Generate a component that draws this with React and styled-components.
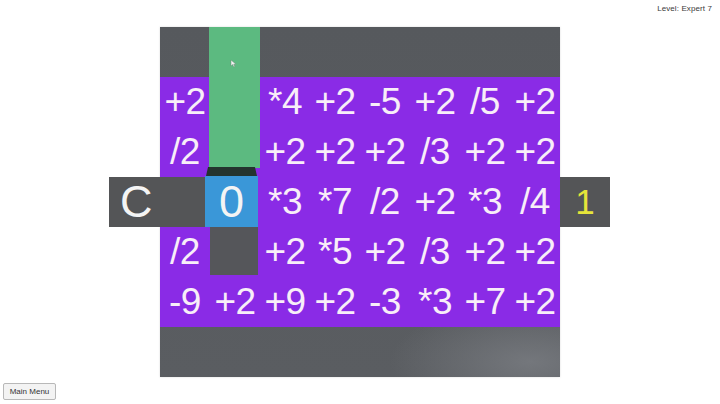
import React from "react";
import styled, { createGlobalStyle } from "styled-components";

const Global = createGlobalStyle`
  html, body { margin: 0; padding: 0; background: #ffffff; }
  body { font-family: "Liberation Sans", Arial, sans-serif; }
`;

const Page = styled.div`
  width: 720px;
  height: 404px;
  display: flex;
  flex-direction: column;
  overflow: hidden;
  background: #ffffff;
`;

const TopBar = styled.div`
  height: 27px;
  display: flex;
  justify-content: flex-end;
  align-items: flex-start;
  padding: 4px 8px 0 0;
  box-sizing: border-box;
`;

const LevelLabel = styled.span`
  font-size: 8px;
  color: #3a3a3a;
  letter-spacing: 0.1px;
`;

const Stage = styled.div`
  display: flex;
  justify-content: center;
`;

const Board = styled.div`
  position: relative;
  width: 400px;
  height: 350px;
  display: grid;
  grid-template-columns: repeat(8, 50px);
  grid-template-rows: 50px repeat(5, 50px) 50px;
  background: radial-gradient(ellipse 140px 60px at 370px 335px, #74777c 0%, rgba(116,119,124,0) 100%),
    linear-gradient(180deg, #56595d 0%, #5a5d61 100%);
  box-shadow: 0 0 2px rgba(0,0,0,0.15);
`;

const Cell = styled.div`
  grid-row: ${(p) => p.$row + 2};
  grid-column: ${(p) => p.$col + 1};
  background: #8a2be6;
  color: #f8eef8;
  font-size: 37px;
  line-height: 50px;
  text-align: center;
  white-space: nowrap;
  letter-spacing: -0.5px;
`;

const GreenColumn = styled.div`
  position: absolute;
  left: 49px;
  top: 0;
  width: 51px;
  height: 141px;
  background: #5cba80;
`;

const Shadow = styled.div`
  position: absolute;
  left: 46px;
  top: 140px;
  width: 51px;
  height: 9px;
  background: #24342f;
  clip-path: polygon(4% 0, 96% 0, 100% 100%, 0 100%);
`;

const Piece = styled.div`
  position: absolute;
  left: ${(p) => p.$x}px;
  top: ${(p) => p.$y}px;
  width: ${(p) => p.$w}px;
  height: ${(p) => p.$h}px;
  background: ${(p) => p.$bg};
  color: ${(p) => p.$fg || "#f4f4f4"};
  font-size: ${(p) => p.$size || 45}px;
  line-height: ${(p) => p.$h}px;
  display: flex;
  justify-content: ${(p) => p.$justify || "center"};
  padding-left: ${(p) => p.$pad || 0}px;
  box-sizing: border-box;
`;

const Cursor = styled.svg`
  position: absolute;
  left: 70px;
  top: 32px;
`;

const Footer = styled.div`
  flex: 1;
  display: flex;
  align-items: flex-start;
  padding: 6px 0 0 3px;
`;

const MenuButton = styled.button`
  width: 53px;
  height: 17px;
  padding: 0;
  font-family: "Liberation Sans", Arial, sans-serif;
  font-size: 8px;
  color: #333;
  background: #f3f3f3;
  border: 1px solid #b8b8b8;
  border-radius: 2px;
`;

const rows = [
  ["+2", null, "*4", "+2", "-5", "+2", "/5", "+2"],
  ["/2", null, "+2", "+2", "+2", "/3", "+2", "+2"],
  [null, null, "*3", "*7", "/2", "+2", "*3", "/4"],
  ["/2", null, "+2", "*5", "+2", "/3", "+2", "+2"],
  ["-9", "+2", "+9", "+2", "-3", "*3", "+7", "+2"],
];

export default function App() {
  return (
    <Page>
      <Global />
      <TopBar>
        <LevelLabel>Level: Expert 7</LevelLabel>
      </TopBar>
      <Stage>
        <Board>
          {rows.map((r, ri) =>
            r.map((v, ci) => (
              <Cell key={`${ri}-${ci}`} $row={ri} $col={ci}>
                {v}
              </Cell>
            ))
          )}
          <GreenColumn />
          <Shadow />
          <Piece $x={-51} $y={150} $w={96} $h={50} $bg="#545557" $justify="flex-start" $pad={11}>
            C
          </Piece>
          <Piece $x={45} $y={149} $w={53} $h={51} $bg="#3a97d8">
            0
          </Piece>
          <Piece $x={50} $y={200} $w={48} $h={48} $bg="#55565a" />
          <Piece $x={400} $y={150} $w={50} $h={50} $bg="#545557" $fg="#e6e53a" $size={35}>
            1
          </Piece>
          <Cursor width="7" height="9" viewBox="0 0 7 9">
            <path d="M1 1 L1 7 L2.6 5.6 L3.8 8 L4.8 7.5 L3.7 5.2 L6 5.2 Z" fill="#f2f2f2" stroke="#6a8a74" strokeWidth="0.5" />
          </Cursor>
        </Board>
      </Stage>
      <Footer>
        <MenuButton>Main Menu</MenuButton>
      </Footer>
    </Page>
  );
}
